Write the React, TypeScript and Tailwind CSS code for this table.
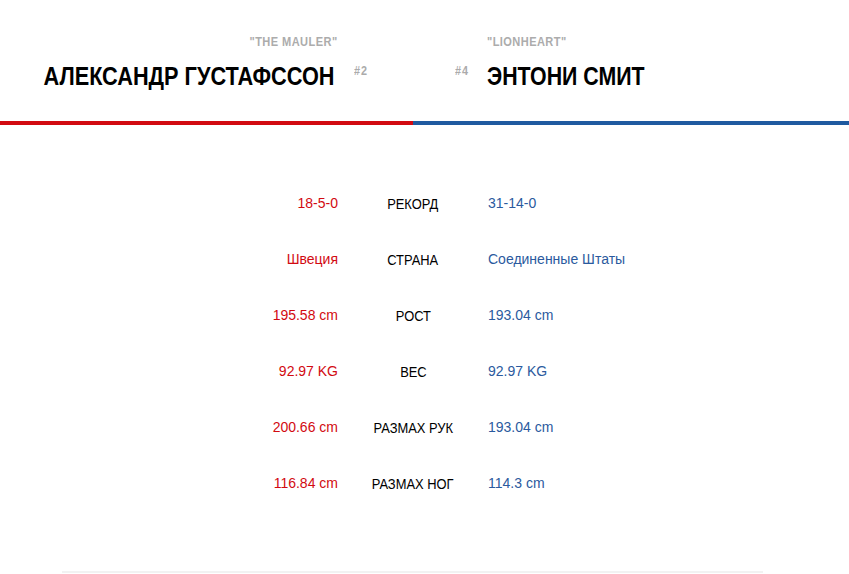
import React from "react";

const stats = [
  { label: "РЕКОРД", left: "18-5-0", right: "31-14-0" },
  { label: "СТРАНА", left: "Швеция", right: "Соединенные Штаты" },
  { label: "РОСТ", left: "195.58 cm", right: "193.04 cm" },
  { label: "ВЕС", left: "92.97 KG", right: "92.97 KG" },
  { label: "РАЗМАХ РУК", left: "200.66 cm", right: "193.04 cm" },
  { label: "РАЗМАХ НОГ", left: "116.84 cm", right: "114.3 cm" },
];

export default function App() {
  return (
    <div className="min-h-[574px] bg-white font-['Liberation_Sans',Arial,sans-serif]">
      {/* header with both fighters */}
      <div className="flex">
        <div className="flex w-[413px] items-start justify-end pr-[44px] pt-[35px]">
          <div className="flex flex-col items-end">
            <div className="origin-right scale-x-[0.85] text-[13px] leading-[13px] font-bold tracking-[0.5px] text-[#acacac]">
              "THE MAULER"
            </div>
            <div className="mr-[3px] mt-[15px] origin-right scale-x-[0.835] whitespace-nowrap text-[26px] leading-[26px] font-bold text-black">
              АЛЕКСАНДР ГУСТАФССОН
            </div>
          </div>
          <div className="ml-[16px] mt-[30px] origin-left scale-x-[0.9] text-[12px] leading-[12px] font-bold tracking-[1px] text-[#ababab]">
            #2
          </div>
        </div>
        <div className="flex flex-1 items-start pl-[42px] pt-[35px]">
          <div className="mr-[17px] mt-[30px] origin-left scale-x-[0.9] text-[12px] leading-[12px] font-bold tracking-[1px] text-[#ababab]">
            #4
          </div>
          <div className="flex flex-col items-start">
            <div className="origin-left scale-x-[0.85] text-[13px] leading-[13px] font-bold tracking-[0.5px] text-[#acacac]">
              "LIONHEART"
            </div>
            <div className="mt-[15px] origin-left scale-x-[0.82] whitespace-nowrap text-[26px] leading-[26px] font-bold text-black">
              ЭНТОНИ СМИТ
            </div>
          </div>
        </div>
      </div>

      <div className="mt-[32px] flex h-[4px]">
        <div className="w-[413px] bg-[#d20a11]" />
        <div className="flex-1 bg-[#1f5aa0]" />
      </div>

      {/* stats */}
      <div className="mt-[50px] flex flex-col">
        {stats.map((s) => (
          <div key={s.label} className="flex h-[56px] items-center text-[14px]">
            <div className="w-[338px] text-right text-[#d20a11]">{s.left}</div>
            <div className="w-[150px] text-center">
              <span className="inline-block scale-x-[0.86] pt-[2px] text-[15px] text-black">{s.label}</span>
            </div>
            <div className="flex-1 text-[#2b5a9e]">{s.right}</div>
          </div>
        ))}
      </div>

      <div className="ml-[62px] mt-[60px] h-[2px] w-[701px] bg-[#f2f2f2]" />
    </div>
  );
}
